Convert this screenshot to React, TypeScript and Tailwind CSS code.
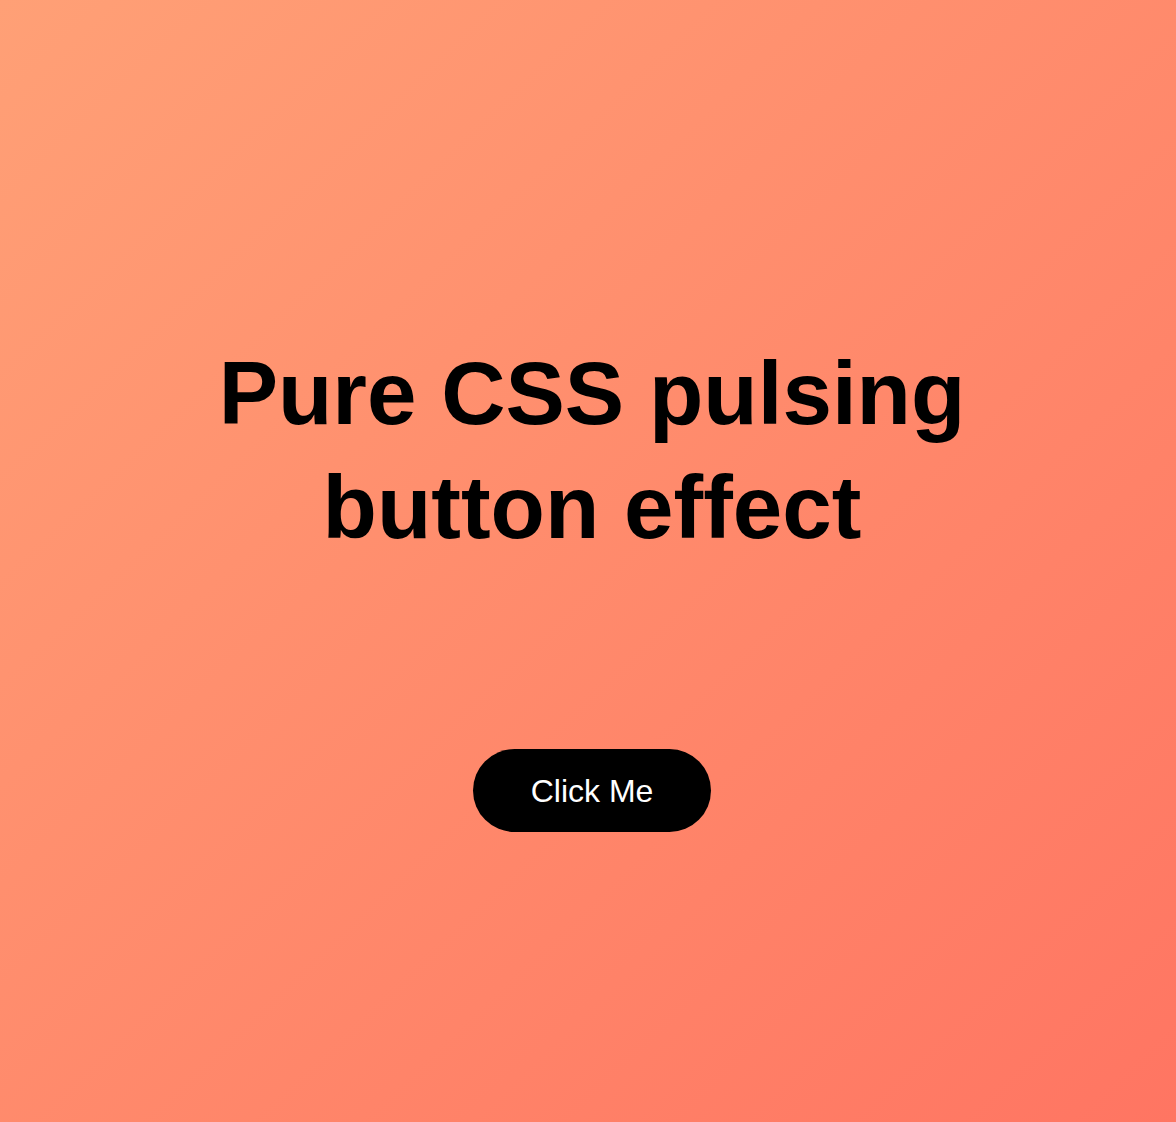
import React from 'react';

export default function App() {
  return (
    <div
      className="
        min-h-screen w-full flex flex-col items-center pl-2
        bg-[linear-gradient(to_bottom_right,#ffa076,#ff7562)]
        font-['Liberation_Sans',Arial,Helvetica,sans-serif]
      "
    >
      {/* title */}
      <h1 className="mt-[336px] w-[800px] text-center text-[89px] leading-[114px] font-bold text-black">
        Pure CSS pulsing button effect
      </h1>

      {/* pulsing button */}
      <button
        type="button"
        className="mt-[185px] h-[83px] w-[238px] rounded-full bg-black text-[32px] leading-none text-white"
      >
        Click Me
      </button>
    </div>
  );
}
